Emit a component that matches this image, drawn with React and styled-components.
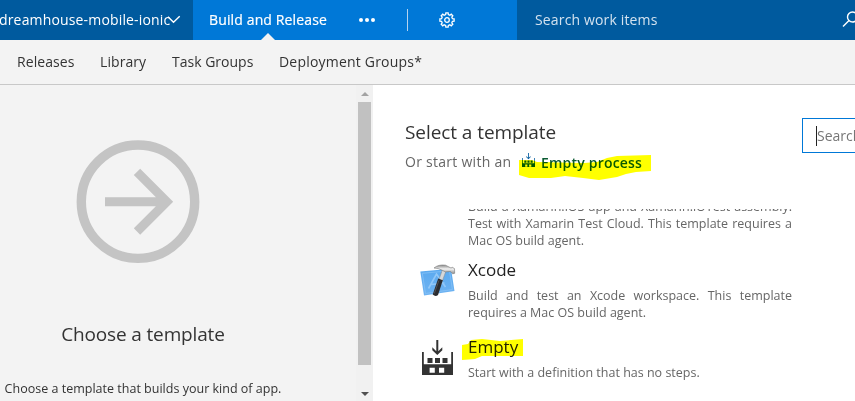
import React from 'react';
import styled, { createGlobalStyle } from 'styled-components';

const GlobalStyle = createGlobalStyle`
  *, *::before, *::after { box-sizing: border-box; }
  body {
    margin: 0;
    background: #fff;
    overflow: hidden;
    font-family: "Open Sans", "Noto Sans", sans-serif;
    color: #333;
  }
`;

const Page = styled.div`
  display: flex;
  flex-direction: column;
  width: 855px;
  height: 401px;
  overflow: hidden;
`;

const TopBar = styled.header`
  display: flex;
  flex: 0 0 40px;
  color: #fff;
  font-size: 14px;
  line-height: 40px;
  white-space: nowrap;
`;

const ProjectPicker = styled.div`
  display: flex;
  align-items: center;
  width: 193px;
  background: #005a9e;
`;

const ProjectName = styled.span`
  width: 168px;
  margin-left: -1px;
  letter-spacing: ${(p) => p.$track}px;
`;

const HubBar = styled.nav`
  display: flex;
  align-items: center;
  width: 324px;
  background: #0078d7;
`;

const ActiveHub = styled.a`
  display: flex;
  flex-direction: column;
  align-items: center;
  position: relative;
  width: 150px;
  height: 40px;
  letter-spacing: ${(p) => p.$track}px;
  -webkit-text-stroke: 0.2px #fff;

  &::after {
    content: "";
    position: absolute;
    bottom: 0;
    left: 68px;
    border: 7px solid transparent;
    border-top: 0;
    border-bottom-color: #f3f3f3;
  }
`;

const Dots = styled.div`
  display: flex;
  gap: 2px;
  width: 64px;
  padding-left: 16px;
`;

const Dot = styled.i`
  width: 4px;
  height: 4px;
  border-radius: 50%;
  background: #fff;
`;

const Divider = styled.i`
  width: 1px;
  height: 22px;
  margin-right: 31px;
  background: #b5d3ef;
`;

const WorkItemSearch = styled.div`
  display: flex;
  align-items: center;
  flex: 1;
  padding-left: 18px;
  background: #005a9e;
  color: #d3e2ef;
  overflow: hidden;

  svg { flex: none; position: relative; top: -1px; }
`;

const SearchHint = styled.span`
  flex: 0 0 307px;
  letter-spacing: ${(p) => p.$track}px;
`;

const SubNav = styled.nav`
  display: flex;
  flex: 0 0 45px;
  padding-left: 17px;
  border-bottom: 1px solid #c8c8c8;
  background: #f3f3f3;
  font-size: 14px;
  line-height: 44px;
  white-space: nowrap;
`;

const SubNavItem = styled.a`
  flex: 0 0 ${(p) => p.$width}px;
  letter-spacing: ${(p) => p.$track}px;
`;

const Body = styled.main`
  display: flex;
  flex: 1;
  min-height: 0;
`;

const Sidebar = styled.aside`
  display: flex;
  flex: 0 0 373px;
  background: #f3f3f3;
  overflow: hidden;
`;

const Intro = styled.section`
  display: flex;
  flex-direction: column;
  flex: 0 0 286px;
  align-items: center;
  margin-right: 70px;
  padding-top: 55px;

  svg { flex: none; margin-left: -10px; }
`;

const IntroTitle = styled.h2`
  margin: 55px 0 0;
  font-size: 19px;
  font-weight: 400;
  line-height: 30px;
  white-space: nowrap;
  letter-spacing: ${(p) => p.$track}px;
`;

const IntroText = styled.p`
  margin: 31px 0 0;
  font-size: 12.5px;
  line-height: 18px;
  text-align: center;
  white-space: nowrap;
  letter-spacing: ${(p) => p.$track}px;
`;

const Scrollbar = styled.div`
  display: flex;
  flex-direction: column;
  align-items: center;
  width: 17px;
  height: 316px;
  padding: 7px 0 5px;
  background: #f1f1f1;
`;

const ScrollArrow = styled.i`
  border: 4px solid transparent;
  ${(p) => (p.$down
    ? 'border-bottom: 0; border-top-color: #505050; margin-top: auto;'
    : 'border-top: 0; border-bottom-color: #a3a3a3; margin-bottom: 6px;')}
`;

const Thumb = styled.div`
  width: 13px;
  height: 263px;
  background: #c1c1c1;
`;

const Picker = styled.section`
  display: flex;
  flex-direction: column;
  flex: 1;
  min-width: 0;
  padding-left: 32px;
`;

const PickerHeader = styled.div`
  display: flex;
  flex: 0 0 124px;
`;

const Headings = styled.div`
  flex: 0 0 397px;
  padding-top: 32px;
  white-space: nowrap;
`;

const PickerTitle = styled.h1`
  margin: 0;
  font-size: 19px;
  font-weight: 400;
  line-height: 30px;
  letter-spacing: ${(p) => p.$track}px;
`;

const StartRow = styled.div`
  display: flex;
  align-items: center;
  height: 28px;
  color: #666;
  font-size: 14px;
`;

const StartLabel = styled.span`
  width: 117px;
  letter-spacing: ${(p) => p.$track}px;
`;

const EmptyLink = styled.a`
  display: flex;
  align-items: center;
  gap: 6px;
  position: relative;
  top: 1px;
  color: #0a5a32;
  font-weight: 600;
  letter-spacing: ${(p) => p.$track}px;

  > svg:first-child { margin-bottom: 4px; }
`;

const Marker = styled.svg`
  position: absolute;
  left: ${(p) => p.$left}px;
  top: ${(p) => p.$top}px;
  mix-blend-mode: multiply;
  pointer-events: none;
`;

const TemplateSearch = styled.div`
  flex: 0 0 160px;
  height: 35px;
  margin-top: 33px;
  padding: 7px 0 0 13px;
  border: 1px solid #0078d7;
  color: #767676;
  font-size: 14px;
  line-height: 20px;
`;

const Caret = styled.span`
  display: block;
  border-left: 1px solid #222;
  white-space: nowrap;
  letter-spacing: ${(p) => p.$track}px;
`;

const TemplateList = styled.div`
  flex: 1;
  min-height: 0;
  overflow: hidden;
`;

const Template = styled.article`
  display: flex;
  height: ${(p) => p.$height}px;
  margin-top: ${(p) => p.$offset || 0}px;
`;

const IconCell = styled.div`
  flex: 0 0 63px;
  padding: ${(p) => p.$pad};
`;

const TemplateBody = styled.div`
  position: relative;
  width: 324px;
  white-space: nowrap;
`;

const TemplateName = styled.h3`
  margin: 0 0 4px;
  color: #222;
  font-size: 17px;
  font-weight: 400;
  line-height: 26px;
  letter-spacing: ${(p) => p.$track}px;
`;

const Line = styled.span`
  display: block;
  color: #666;
  font-size: 12.5px;
  line-height: 17px;
  text-align: justify;
  text-align-last: ${(p) => (p.$full ? 'justify' : 'left')};
  letter-spacing: ${(p) => p.$track}px;
`;

const ChevronIcon = () => (
  <svg width="14" height="10" viewBox="0 0 14 10" fill="none" stroke="#fff" strokeWidth="1.4">
    <path d="M1 1.8 6.5 7.3 12.7 1.2" />
  </svg>
);

const gearPath = Array.from({ length: 8 }, (_, i) => {
  const at = (deg, r) => {
    const a = ((i * 45 + deg) * Math.PI) / 180;
    return `${(8 + r * Math.cos(a)).toFixed(2)} ${(8 + r * Math.sin(a)).toFixed(2)}`;
  };
  return `${i ? 'L' : 'M'}${at(-14, 5.6)}L${at(-9, 7.2)}L${at(9, 7.2)}L${at(14, 5.6)}`;
}).join('') + 'Z';

const GearIcon = () => (
  <svg width="16" height="16" viewBox="0 0 16 16" fill="none" stroke="#fff" strokeWidth="1.3">
    <path d={gearPath} />
    <circle cx="8" cy="8" r="2.3" />
  </svg>
);

const SearchIcon = () => (
  <svg width="17" height="17" viewBox="0 0 17 17" fill="none" stroke="#fff" strokeWidth="1.4">
    <circle cx="10.5" cy="6" r="5" />
    <path d="M7 9.6 1 15.6" />
  </svg>
);

const ArrowCircle = () => (
  <svg width="124" height="124" viewBox="0 0 124 124" fill="none" stroke="#c4c4c4">
    <circle cx="62" cy="61.7" r="56.7" strokeWidth="9.4" />
    <path d="M29 61.7H90.8M61 31.9 90.8 61.7 61 91.5" strokeWidth="9" />
  </svg>
);

const FactoryIcon = ({ size = 31, color = '#333' }) => (
  <svg width={size} height={(size * 35) / 31} viewBox="0 0 31 35" fill={color}>
    <path d="M14.3 0h2v11.2l4-4v3L15.3 15l-5-4.8v-3l4 4z" />
    <path fillRule="evenodd" d="M0 12h1.8v12.3h27.4V12H31v23H0zM7.6 27.7v5h5.2v-5zM17 27.7v5h5.2v-5z" />
    <path d="M5.5 18h5v5h-5zM13 18h5v5h-5zM20.5 18h5v5h-5z" />
  </svg>
);

const XcodeIcon = () => (
  <svg width="37" height="35" viewBox="0 0 37 35">
    <defs>
      <linearGradient id="sheet" x1="0" y1="0" x2="0" y2="1">
        <stop offset="0" stopColor="#5aa9ef" />
        <stop offset="1" stopColor="#6eb3f2" />
      </linearGradient>
      <linearGradient id="steel" x1="0" y1="0" x2="0" y2="1">
        <stop offset="0" stopColor="#888" />
        <stop offset=".45" stopColor="#f3f3f3" />
        <stop offset="1" stopColor="#888" />
      </linearGradient>
    </defs>
    <path d="M.3 7.5 31 4.8 34.5 27 4 31.5z" fill="url(#sheet)" />
    <path d="M2.3 9.3 29.5 6.8 32.4 25.5 5.5 29.5z" fill="none" stroke="#8cc4f7" strokeWidth=".7" />
    <path d="M8.5 24.5 16.5 10l9 13M11.5 20.5l13-1.5" fill="none" stroke="#92c8f8" strokeWidth="1.6" />
    <path d="M22.5 5.5 26 7 22.3 17l-3.4-1.2z" fill="#d5d8da" stroke="#888" strokeWidth=".5" />
    <path d="M18.2 14.5 22.8 16.3 18 31q-2.5 2.2-5.3-.4z" fill="#2b2c2f" />
    <path d="m18.9 16.5-4.6 13" stroke="#606266" strokeWidth=".7" />
    <path d="M14 4Q18.5.2 25.5 1.2L31 4l1.3-.7 2.2 1.3.2 4.7-2 .5-2.4-2.3-4.8.4-3.4-1.7Q18.5 4 14 4z" fill="url(#steel)" stroke="#777" strokeWidth=".6" />
  </svg>
);

export default function App() {
  return (
    <Page>
      <GlobalStyle />
      <TopBar>
        <ProjectPicker>
          <ProjectName $track={0.16}>dreamhouse-mobile-ionic</ProjectName>
          <ChevronIcon />
        </ProjectPicker>
        <HubBar>
          <ActiveHub $track={0.14}>Build and Release</ActiveHub>
          <Dots><Dot /><Dot /><Dot /></Dots>
          <Divider />
          <GearIcon />
        </HubBar>
        <WorkItemSearch>
          <SearchHint $track={0.15}>Search work items</SearchHint>
          <SearchIcon />
        </WorkItemSearch>
      </TopBar>
      <SubNav>
        <SubNavItem $width={83} $track={0.08}>Releases</SubNavItem>
        <SubNavItem $width={72} $track={0.08}>Library</SubNavItem>
        <SubNavItem $width={107} $track={0}>Task Groups</SubNavItem>
        <SubNavItem $width={150} $track={0.2}>Deployment Groups*</SubNavItem>
      </SubNav>
      <Body>
        <Sidebar>
          <Intro>
            <ArrowCircle />
            <IntroTitle $track={-0.15}>Choose a template</IntroTitle>
            <IntroText $track={0.01}>
              Choose a template that builds your kind of app.
              <br />
              Don't worry if it's not an exact match;
            </IntroText>
          </Intro>
          <Scrollbar>
            <ScrollArrow />
            <Thumb />
            <ScrollArrow $down />
          </Scrollbar>
        </Sidebar>
        <Picker>
          <PickerHeader>
            <Headings>
              <PickerTitle $track={-0.07}>Select a template</PickerTitle>
              <StartRow>
                <StartLabel $track={0.27}>Or start with an</StartLabel>
                <EmptyLink $track={0.2}>
                  <FactoryIcon size={13} color="#005a9e" />
                  Empty process
                  <Marker $left={-3} $top={0} width="133" height="28" viewBox="0 0 133 28">
                    <path d="M0 7H13L18 9 65 10 78 9 88 5 98 3 132 2V18L117 19 107 21 98 24 80 27 64 25 46 23 32 25 10 25 0 22z" fill="#ff0" />
                  </Marker>
                </EmptyLink>
              </StartRow>
            </Headings>
            <TemplateSearch><Caret $track={0}>Search</Caret></TemplateSearch>
          </PickerHeader>
          <TemplateList>
            <Template $height={59} $offset={-11}>
              <IconCell />
              <TemplateBody>
                <Line $full $track={0}>Build a Xamarin.iOS app and Xamarin.iOTest assembly.</Line>
                <Line $full $track={0}>Test with Xamarin Test Cloud. This template requires a</Line>
                <Line $track={0}>Mac OS build agent.</Line>
              </TemplateBody>
            </Template>
            <Template $height={77}>
              <IconCell $pad="7px 0 0 15px"><XcodeIcon /></IconCell>
              <TemplateBody>
                <TemplateName $track={0}>Xcode</TemplateName>
                <Line $full $track={0}>Build and test an Xcode workspace. This template</Line>
                <Line $track={0}>requires a Mac OS build agent.</Line>
              </TemplateBody>
            </Template>
            <Template $height={77}>
              <IconCell $pad="6px 0 0 17px"><FactoryIcon /></IconCell>
              <TemplateBody>
                <TemplateName $track={0}>Empty</TemplateName>
                <Line $track={0}>Start with a definition that has no steps.</Line>
                <Marker $left={-6} $top={4} width="62" height="24" viewBox="0 0 62 24">
                  <path d="M0 7 6 6 9 2 20 1 38 3 61 1V18L38 18 20 18 13 21 0 22z" fill="#ff0" />
                </Marker>
              </TemplateBody>
            </Template>
          </TemplateList>
        </Picker>
      </Body>
    </Page>
  );
}
